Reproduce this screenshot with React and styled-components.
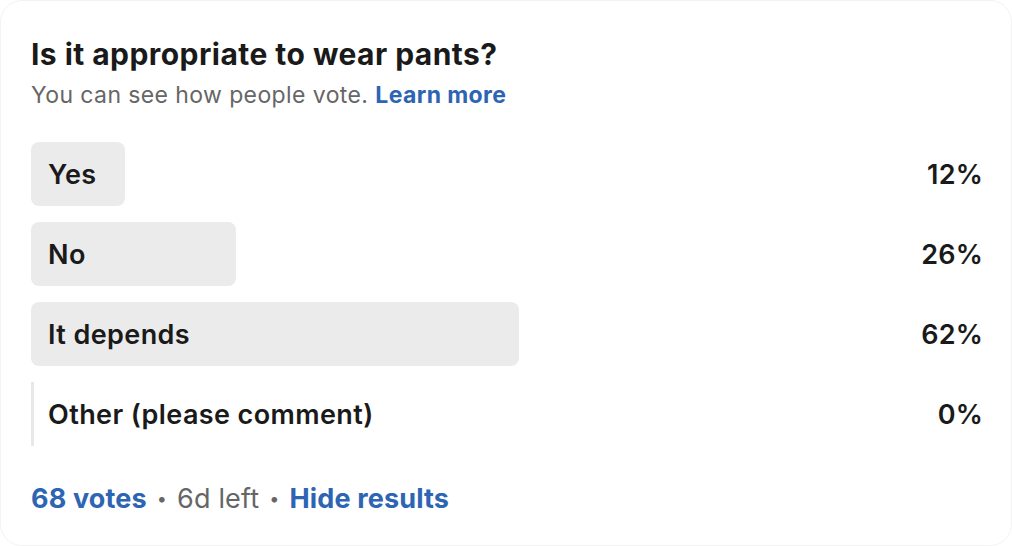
import React from "react";
import styled, { createGlobalStyle } from "styled-components";

const GlobalStyle = createGlobalStyle`
    html, body {
        margin: 0;
        padding: 0;
        background: #ffffff;
    }
    body {
        font-family: Inter, "Noto Sans", "Liberation Sans", sans-serif;
        -webkit-font-smoothing: antialiased;
    }
`;

const Card = styled.div`
    box-sizing: border-box;
    width: 1012px;
    height: 546px;
    background: #ffffff;
    border: 1px solid #f3f3f3;
    border-radius: 22px;
    padding: 34px 28px 0 30px;
    color: #1b1b1b;
`;

const Title = styled.h1`
    margin: 0;
    font-size: 30px;
    line-height: 38px;
    font-weight: 700;
    letter-spacing: 0.45px;
    color: #1a1a1a;
`;

const Subtitle = styled.p`
    margin: 8px 0 0;
    font-size: 23px;
    line-height: 28px;
    letter-spacing: 0.4px;
    color: #666666;
`;

const Link = styled.a`
    color: #2d64b3;
    font-weight: 700;
    text-decoration: none;
`;

const Options = styled.div`
    display: flex;
    flex-direction: column;
    gap: 16px;
    margin-top: 33px;
`;

const Row = styled.div`
    display: flex;
    align-items: center;
    height: 64px;
`;

const Track = styled.div`
    position: relative;
    flex: 1;
    height: 100%;
    display: flex;
    align-items: center;
`;

const Fill = styled.div`
    position: absolute;
    left: 0;
    top: 0;
    bottom: 0;
    background: #ebebeb;
    border-radius: 8px;
    ${(p) => p.$empty && `
        border-radius: 0;
        background: #e8e8e8;
    `}
`;

const Label = styled.span`
    position: relative;
    padding-left: 17px;
    font-size: 27px;
    font-weight: 600;
    letter-spacing: 0.4px;
    color: #1a1a1a;
`;

const Percent = styled.span`
    width: 165px;
    text-align: right;
    font-size: 27px;
    font-weight: 600;
    letter-spacing: 0.2px;
    color: #1a1a1a;
`;

const Footer = styled.div`
    display: flex;
    align-items: center;
    gap: 10px;
    margin-top: 36px;
    font-size: 27px;
    line-height: 34px;
    letter-spacing: 0.15px;
    color: #666666;
`;

const FooterLink = styled.span`
    color: #2d64b3;
    font-weight: 700;
`;

const Dot = styled.span`
    font-size: 18px;
    color: #666666;
`;

const options = [
    { label: "Yes", percent: 12 },
    { label: "No", percent: 26 },
    { label: "It depends", percent: 62 },
    { label: "Other (please comment)", percent: 0 }
];

export default function App() {
    return (
        <>
            <GlobalStyle />
            <Card>
                <Title>{"Is it appropriate to wear pants?"}</Title>
                <Subtitle>
                    {"You can see how people vote. "}
                    <Link href="#">{"Learn more"}</Link>
                </Subtitle>
                <Options>
                    {options.map((o) => (
                        <Row key={o.label}>
                            <Track>
                                <Fill
                                    $empty={o.percent === 0}
                                    style={{ width: o.percent ? `${o.percent}%` : "3px" }}
                                />
                                <Label>{o.label}</Label>
                            </Track>
                            <Percent>{`${o.percent}%`}</Percent>
                        </Row>
                    ))}
                </Options>
                <Footer>
                    <FooterLink>{"68 votes"}</FooterLink>
                    <Dot>{"•"}</Dot>
                    <span>{"6d left"}</span>
                    <Dot>{"•"}</Dot>
                    <FooterLink>{"Hide results"}</FooterLink>
                </Footer>
            </Card>
        </>
    );
}
